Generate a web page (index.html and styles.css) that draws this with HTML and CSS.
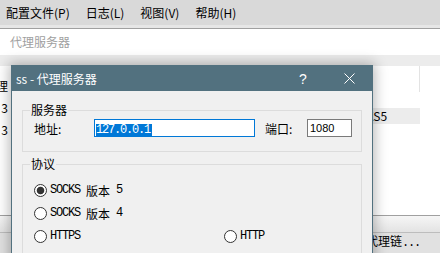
FILE: index.html
```html
<!DOCTYPE html>
<html lang="zh-CN">
<head>
<meta charset="utf-8">
<title>代理服务器</title>
<link rel="stylesheet" href="styles.css">
</head>
<body>
<div class="menubar">
  <span>配置文件(P)</span><span>日志(L)</span><span>视图(V)</span><span>帮助(H)</span>
</div>
<div class="menu-band"></div>
<div class="panel-title">代理服务器</div>
<div class="work">
  <div class="list">
    <div class="lcol">
      <div class="litem"><span>代理</span></div>
      <div class="litem"><span>3</span></div>
      <div class="litem"><span>3</span></div>
    </div>
    <div class="lmain"></div>
    <div class="rlist">
      <div class="lrow head">
        <div class="lc hsep"></div>
        <div class="lc"></div>
      </div>
      <div class="lrow">
        <div class="lc"></div>
        <div class="lc"></div>
      </div>
      <div class="lrow sel">
        <div class="lc"><span>SOCKS5</span></div>
        <div class="lc blank"></div>
      </div>
    </div>
  </div>
  <div class="strip"></div>
  <div class="footer"><span>代理链<span class="mono">...</span></span></div>

  <div class="dialog">
    <div class="dlg-title">
      <span class="t">ss - 代理服务器</span>
      <span class="tbtn q">?</span>
      <span class="tbtn">
        <svg width="11" height="11" viewBox="0 0 11 11"><path d="M0.5 0.5L10.5 10.5M10.5 0.5L0.5 10.5" stroke="#fff" stroke-width="1" fill="none"/></svg>
      </span>
    </div>
    <div class="dlg-body">
      <fieldset class="group g1">
        <legend>服务器</legend>
        <div class="row">
          <span class="lbl1">地址:</span>
          <span class="in1"><span class="selt">127.0.0.1</span></span>
          <span class="lbl2">端口:</span>
          <span class="in2">1080</span>
        </div>
      </fieldset>
      <fieldset class="group g2">
        <legend>协议</legend>
        <div class="radios">
          <div class="radio wide"><span class="rc on"></span><span class="mono">SOCKS </span><span>版本</span><span class="mono"> 5</span></div>
          <div class="radio wide"><span class="rc"></span><span class="mono">SOCKS </span><span>版本</span><span class="mono"> 4</span></div>
          <div class="radio"><span class="rc"></span><span class="mono">HTTPS</span></div>
          <div class="radio"><span class="rc"></span><span class="mono">HTTP</span></div>
        </div>
      </fieldset>
    </div>
  </div>
</div>
</body>
</html>
```

FILE: styles.css
```css
* { box-sizing: border-box; }
html, body { margin: 0; padding: 0; }
body {
  width: 440px;
  height: 253px;
  overflow: hidden;
  background: #f0f0f0;
  font-family: "Noto Sans CJK SC", "Noto Sans", sans-serif;
  font-size: 12px;
  color: #000;
}
.mono {
  font-family: "Liberation Mono", "Noto Sans CJK SC", monospace;
  letter-spacing: -1.2px;
  white-space: pre;
}
.menubar {
  height: 25px;
  padding: 1px 6px 0;
  display: flex;
  gap: 16px;
  line-height: 24px;
  background: #d9d9d9;
  white-space: nowrap;
}
.menu-band {
  height: 4px;
  background: #e6e6e6;
  border-bottom: 1px solid #a0a0a0;
}
.panel-title {
  height: 26px;
  line-height: 26px;
  background: #fff;
  color: #a0a0a0;
  padding-left: 10px;
}
.work {
  position: relative;
  height: 198px;
  padding-top: 11px;
  background: #ececec;
}
.list {
  height: 150px;
  background: #fff;
  border-bottom: 1px solid #a0a0a0;
  display: flex;
  overflow: hidden;
}
.lcol {
  width: 8px;
  padding-top: 9px;
  display: flex;
  flex-direction: column;
}
.litem {
  height: 22px;
  line-height: 22px;
  display: flex;
  justify-content: flex-end;
  overflow: hidden;
  white-space: nowrap;
}
.lmain { flex: 1; }
.rlist {
  width: 98px;
  display: flex;
  flex-direction: column;
}
.lrow {
  display: grid;
  grid-template-columns: 78px 1fr;
  height: 16px;
  line-height: 16px;
}
.lrow.head { height: 26px; }
.lc { overflow: hidden; white-space: nowrap; }
.hsep { border-right: 1px solid #e3e3e3; }
.lrow.sel .lc:not(.blank) { background: #ececec; }
.strip {
  height: 17px;
  background: linear-gradient(#f6f6f6, #e3e3e3);
  border-bottom: 1px solid #bdbdbd;
}
.footer {
  height: 20px;
  background: #e1e1e1;
  display: flex;
  justify-content: flex-end;
  padding-right: 20px;
  line-height: 16px;
}

/* dialog window */
.dialog {
  position: absolute;
  left: 11px;
  top: 10px;
  width: 362px;
  height: 200px;
  border: 1px solid #52717f;
  background: #f0f0f0;
  box-shadow: 0 0 12px 2px rgba(0, 0, 0, 0.28);
}
.dlg-title {
  height: 25px;
  background: #52717f;
  color: #fff;
  display: flex;
  align-items: center;
}
.dlg-title .t { flex: 1; padding-left: 4px; line-height: 25px; white-space: pre; }
.tbtn {
  width: 46px;
  height: 25px;
  display: flex;
  align-items: center;
  justify-content: center;
}
.tbtn.q { font-family: "Liberation Sans", sans-serif; font-size: 14px; }
.dlg-body { padding: 12px 10px 0 10px; }
.group {
  margin: 0;
  min-width: 0;
  border: 1px solid #dcdcdc;
}
.group legend {
  margin-left: -4px;
  padding: 0 1px;
  line-height: 14px;
}
.g1 { padding: 2px 0 14px 11px; }
.g2 { margin-top: 5px; padding: 8px 0 20px 11px; }
.row { display: flex; align-items: center; height: 18px; }
.lbl1 { width: 60px; }
.in1 {
  width: 161px;
  height: 18px;
  border: 1px solid #0078d7;
  background: #fff;
  padding: 2px 1px;
  line-height: 12px;
}
.selt {
  display: inline-block;
  background: #0078d7;
  color: #fff;
  font-family: "Liberation Mono", monospace;
  font-size: 12px;
  line-height: 12px;
  letter-spacing: -1.2px;
  padding-right: 2px;
}
.lbl2 { margin-left: 10px; width: 42px; }
.in2 {
  width: 45px;
  height: 18px;
  border: 1px solid #7a7a7a;
  background: #fff;
  padding: 0 2px;
  font-family: "Liberation Sans", sans-serif;
  font-size: 11px;
  line-height: 16px;
}
.radios {
  display: grid;
  grid-template-columns: 190px 1fr;
  grid-auto-rows: 22px;
  row-gap: 1px;
}
.radio { display: flex; align-items: center; white-space: pre; }
.radio.wide { grid-column: 1 / -1; }
.rc {
  flex: none;
  width: 13px;
  height: 13px;
  margin-right: 3px;
  border: 1px solid #333;
  border-radius: 50%;
  background: #fff;
}
.rc.on { background: radial-gradient(circle, #333 0 3.4px, #fff 4.2px); }
```
